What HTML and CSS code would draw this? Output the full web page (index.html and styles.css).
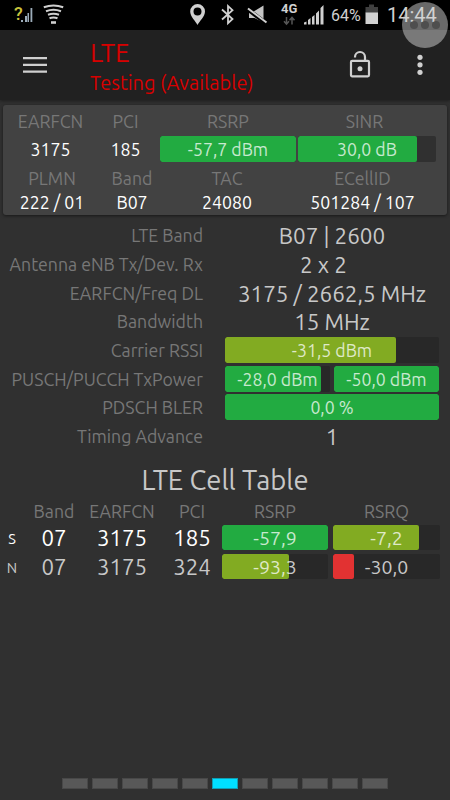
FILE: index.html
```
<!DOCTYPE html>
<html>
  <head>
    <meta charset="utf-8">
    <title>LTE</title>
    <link rel="stylesheet" href="styles.css">
  </head>
  <body>
    <div class="screen">
      <div class="status">
        <svg width="450" height="30" viewBox="0 0 450 30">
          <!-- signal -->
          <path d="M21 22v-2h2v2zM25 22v-6h2v6zM27.500 22v-9h1.500v9zM30.500 22V8h1.800v14z" fill="#9cacba"/>
          <!-- wifi -->
          <g fill="none" stroke="#d0d0d0" stroke-width="2">
            <path d="M43.800 7.300q9.700-3.600 19.400 0"/>
            <path d="M46 11.200q7.500-3 15 0"/>
            <path d="M48 14.800q5.500-2.200 11 0"/>
            <path d="M49.500 18.200q4-1.600 8 0"/>
            <path d="M51 22.500h5" stroke-width="2.600"/>
          </g>
          <!-- location -->
          <path fill-rule="evenodd" d="M197.500 25c-2-4-7.300-8.500-7.300-13.500a7.400 7.400 0 0 1 14.800 0c0 5-5.500 9.500-7.500 13.500zM197.500 7.500a4 4 0 1 0 0 8 4 4 0 0 0 0-8z" fill="#d0d0d0"/>
          <!-- bluetooth -->
          <path d="M222 9.500l10.500 9.500-4.500 4.200V6l4.500 4.200L222 19.500" fill="none" stroke="#d0d0d0" stroke-width="1.800"/>
          <!-- mute -->
          <path d="M249 11h5.500l9-5.500v17l-9-4.500H249z" fill="#c4c4c4"/>
          <path d="M247.500 9.200l18.500 14" stroke="#000" stroke-width="4"/>
          <path d="M248 8.500l18.500 14" stroke="#d0d0d0" stroke-width="2"/>
          <!-- data arrows -->
          <path d="M286.500 17v7m-2.500-2.800l2.500 2.800 2.500-2.800M292 24.500v-7m-2.500 2.800l2.500-2.800 2.500 2.800" fill="none" stroke="#555" stroke-width="1.500"/>
          <path d="M304 24.500v-2l2.500-1v3zM308 24.500v-4.500l2.500-2v6.500zM312 24.500V17l2.500-2v9.500zM316 24.500v-11l3-3v14zM320.500 24.500V8l3-3v19.500z" fill="#d0d0d0"/>
          <!-- battery -->
          <path d="M369 4.500h5v2.500h4v6h-12.500V7h3.500z" fill="#404040"/>
          <path d="M365.500 12.500H378V24h-12.500z" fill="#d0d0d0"/>
        </svg>
        <span class="st unknown">?</span>
        <span class="st net">4G</span>
        <span class="st percent">64%</span>
        <span class="st clock">14:44</span>
      </div>
      <div class="bubble"><i></i><i></i><i></i></div>

      <div class="header">
        <svg class="menu" width="24" height="18" viewBox="0 0 24 18">
          <path d="M0 2.200h24M0 8.900h24M0 15.600h24" stroke="#d0d0d0" stroke-width="2.300"/>
        </svg>
        <div class="title">
          <h1>LTE</h1>
          <h2>Testing (Available)</h2>
        </div>
        <svg class="lock" width="22" height="28" viewBox="0 0 22 28">
          <rect x="2" y="10.800" width="18" height="15.500" rx="1.200" fill="none" stroke="#d0d0d0" stroke-width="2.200"/>
          <path d="M6 7.500V7a5 5 0 0 1 10 0v3.300" fill="none" stroke="#d0d0d0" stroke-width="2.200"/>
          <circle cx="11" cy="18.700" r="2.500" fill="#d0d0d0"/>
        </svg>
        <svg class="more" width="6" height="22" viewBox="0 0 6 22">
          <g fill="#d0d0d0"><circle cx="3" cy="3.300" r="2.600"/><circle cx="3" cy="10.800" r="2.600"/><circle cx="3" cy="18.300" r="2.600"/></g>
        </svg>
      </div>

      <div class="card">
        <div class="row1">
          <label>EARFCN</label><label class="pci">PCI</label><label>RSRP</label><label class="sinr">SINR</label>
          <b>3175</b>
          <b class="pci">185</b>
          <div class="bar"><i class="green" style="width:100%"></i><span>-57,7 dBm</span></div>
          <div class="bar"><i class="green" style="width:86.500%"></i><span>30,0 dB</span></div>
        </div>
        <div class="row2">
          <label>PLMN</label><label>Band</label><label>TAC</label><label>ECellID</label>
          <b>222 / 01</b>
          <b>B07</b>
          <b>24080</b>
          <b>501284 / 107</b>
        </div>
      </div>

      <div class="details">
        <label>LTE Band</label><p>B07 | 2600</p>
        <label>Antenna eNB Tx/Dev. Rx</label><p class="mimo">2 x 2</p>
        <label>EARFCN/Freq DL</label><p>3175 / 2662,5 MHz</p>
        <label>Bandwidth</label><p>15 MHz</p>
        <label>Carrier RSSI</label>
        <div class="bar"><i class="lime" style="width:80%"></i><span>-31,5 dBm</span></div>
        <label>PUSCH/PUCCH TxPower</label>
        <div class="pair">
          <div class="bar"><i class="green" style="width:91.500%"></i><span>-28,0 dBm</span></div>
          <div class="bar"><i class="green" style="width:100%"></i><span>-50,0 dBm</span></div>
        </div>
        <label>PDSCH BLER</label>
        <div class="bar"><i class="green" style="width:100%"></i><span>0,0 %</span></div>
        <label>Timing Advance</label><p>1</p>
      </div>

      <h3>LTE Cell Table</h3>
      <div class="cells head">
        <span></span><label>Band</label><label>EARFCN</label><label>PCI</label><label>RSRP</label><label>RSRQ</label>
      </div>
      <div class="cells serving">
        <small>S</small><p>07</p><p>3175</p><p>185</p>
        <div class="bar"><i class="green" style="width:100%"></i><span>-57,9</span></div>
        <div class="bar"><i class="lime" style="width:80%"></i><span>-7,2</span></div>
      </div>
      <div class="cells">
        <small>N</small><p>07</p><p>3175</p><p>324</p>
        <div class="bar"><i class="lime" style="width:63.500%"></i><span>-93,3</span></div>
        <div class="bar"><i class="red" style="width:20%"></i><span>-30,0</span></div>
      </div>

      <div class="pager">
        <i></i><i></i><i></i><i></i><i></i><i class="active"></i><i></i><i></i><i></i><i></i><i></i>
      </div>
    </div>
  </body>
</html>
```
FILE: styles.css
```
*{ margin:0; padding:0; box-sizing: border-box; }
body{ background: #303030; font-family: Ubuntu, "Noto Sans", sans-serif; color: #c8c8c8; }
.screen{ width: 450px; height: 800px; position: relative; overflow: hidden; display: flex; flex-direction: column; }
h1,h2,h3,b{ font-weight: normal; }
label{ font-size: 17.700px; color: #777; white-space: nowrap; }

/* status bar */
.status{ height: 30px; background: #000; position: relative; flex: none; }
.status svg{ display: block; }
.st{ position: absolute; line-height: 20px; font-family: Roboto, sans-serif; color: #d0d0d0; white-space: nowrap; }
.unknown{ left: 14px; top: 4px; font-size: 18px; font-weight: 500; color: #c9c33c; }
.net{ left: 281px; top: -1px; font-size: 13px; font-weight: bold; }
.percent{ left: 331px; top: 6px; font-size: 16px; }
.clock{ left: 387px; top: 5px; font-size: 20px; }
.bubble{ position: absolute; left: 402px; top: 2px; width: 46px; height: 46px; border-radius: 50%;
   background: rgba(210,210,210,.5); display: flex; justify-content: center; align-items: center; gap: 3px; z-index: 2; }
.bubble i{ width: 8px; height: 8px; border-radius: 50%; background: rgba(60,60,60,.6); }

/* header */
.header{ height: 70px; background: #212121; flex: none; display: flex; box-shadow: 0 1px 3px rgba(0,0,0,.4); }
.menu{ margin: 26px 0 0 23px; }
.title{ margin: 7px 0 0 43px; width: 259px; color: #d80000; }
.title h1{ font-size: 26px; line-height: 31px; }
.title h2{ font-size: 20px; line-height: 29px; white-space: nowrap; }
.lock{ margin-top: 20px; }
.more{ margin: 24px 0 0 46px; }

.card{ margin: 5px 3px 0; height: 110px; background: #424242; border-radius: 3px; flex: none;
   box-shadow: 0 1px 3px rgba(0,0,0,.5); padding: 3px 0 0 4px; text-align: center; }
.row1{ display: grid; grid-template-columns: 87px 62px 136px 138px; grid-template-rows: 28px 26px; column-gap: 2px; }
.row1 label,.row1 b{ line-height: 27px; }
.row1 .pci{ padding-right: 3px; }
.row1 .sinr{ padding-right: 5px; }
.row2{ display: grid; grid-template-columns: 90px 70px 120px 151px; grid-template-rows: 29px 24px; line-height: 34px; }
.row2 b{ line-height: 24px; }
.card b{ font-size: 17.700px; color: #fff; }

.bar{ height: 26px; background: #282828; border-radius: 2px; position: relative; overflow: hidden; text-align: center; }
.card .bar{ background: #303030; }
.bar i{ position: absolute; left: 0; top: 0; height: 100%; border-radius: 2px; }
.bar span{ position: relative; font-size: 17.700px; line-height: 28px; color: rgba(255,255,255,.75); white-space: nowrap; }
.green{ background: #22ab41; }
.lime{ background: #82ab22; }
.red{ background: #e23232; }

.details{ margin-top: 6.500px; display: grid; grid-template-columns: 203px 214px; column-gap: 22px;
   grid-auto-rows: 28.700px; align-items: center; flex: none; }
.details label{ text-align: right; }
.details p{ font-size: 22.400px; line-height: 29px; text-align: center; white-space: nowrap; }
.details .mimo{ padding-right: 17px; }
.details > .bar,.pair{ margin-bottom: 1px; }
.pair{ display: grid; grid-template-columns: 105px 105px; gap: 4px; }

h3{ font-size: 27.400px; line-height: 36px; text-align: center; margin: 11px 0 1px; flex: none; }
.cells{ display: grid; grid-template-columns: 18px 66px 70px 65px 106px 107px; padding-left: 3px;
   grid-template-rows: 28.700px; align-items: center; text-align: center; flex: none; }
.cells > :nth-child(4){ padding-left: 5px; }
.cells > :nth-child(6){ margin-left: 5px; margin-right: -5px; }
.cells p{ font-size: 22.200px; line-height: 28px; }
.cells small{ font-size: 14.500px; }
.cells .bar{ height: 25px; margin-bottom: 2px; }
.cells .bar span{ font-size: 19.500px; line-height: 27px; }
.head{ grid-template-rows: 25px; }
.serving{ color: #fff; }

.pager{ position: absolute; left: 62px; bottom: 11px; display: flex; gap: 4px; }
.pager i{ width: 26px; height: 11px; background: #585858; border: 1px solid #484848; }
.pager .active{ background: #00dfff; border-color: #109eb4; }
```
